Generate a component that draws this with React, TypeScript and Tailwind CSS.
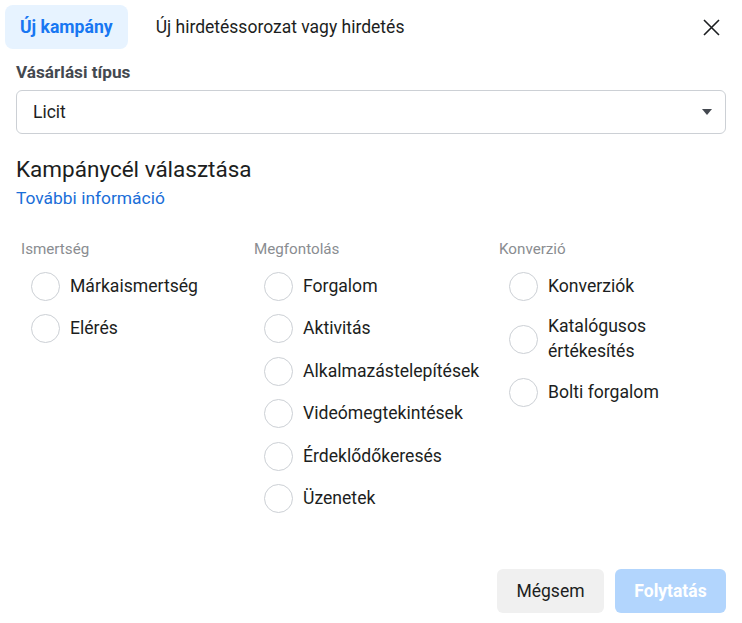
import React from 'react';

type Col = { title: string; items: string[][] };

const columns: Col[] = [
  { title: 'Ismertség', items: [['Márkaismertség'], ['Elérés']] },
  {
    title: 'Megfontolás',
    items: [['Forgalom'], ['Aktivitás'], ['Alkalmazástelepítések'], ['Videómegtekintések'], ['Érdeklődőkeresés'], ['Üzenetek']],
  },
  { title: 'Konverzió', items: [['Konverziók'], ['Katalógusos', 'értékesítés'], ['Bolti forgalom']] },
];

const widths = ['w-[233px]', 'w-[245px]', 'w-[200px]'];

export default function App() {
  return (
    <div className="h-[623px] w-[742px] bg-white font-['Roboto',sans-serif] text-[#1c1e21]">
      <div className="flex h-[54px] items-center px-[5px]">
        <div className="flex h-[44px] items-center rounded-lg bg-[#e7f3ff] px-[15px] text-[17.6px] font-bold text-[#1877f2]">
          Új kampány
        </div>
        <div className="ml-[28px] text-[17.5px]">Új hirdetéssorozat vagy hirdetés</div>
        <button className="ml-auto mr-[17px] text-[#1c1e21]">
          <svg width="17" height="17" viewBox="0 0 17 17" fill="none" stroke="currentColor" strokeWidth="1.6">
            <path d="M1 1L16 16M16 1L1 16" />
          </svg>
        </button>
      </div>

      <div className="px-4">
        <div className="mt-[8px] text-[17.2px] font-bold leading-[20px] text-[#444950]">Vásárlási típus</div>
        <div className="mt-[8px] flex h-[44px] items-center rounded-md border border-[#ccd0d5] px-[16px]">
          <span className="text-[17.5px]">Licit</span>
          <svg className="ml-auto mr-[-4px]" width="12" height="8" viewBox="0 0 12 8">
            <path d="M1 1h10L6 7z" fill="#444950" />
          </svg>
        </div>

        <div className="mt-[21px] text-[22.5px] leading-[28px]">Kampánycél választása</div>
        <div className="mt-[4px] text-[17.4px] leading-[22px] text-[#1a6ed8]">További információ</div>

        <div className="mt-[31px] flex">
          {columns.map((col, ci) => (
            <div key={col.title} className={widths[ci]}>
              <div className="pl-[5px] text-[15.2px] leading-[18px] text-[#8a8d91]">{col.title}</div>
              <div className="mt-[14px] flex flex-col gap-[13.4px] pl-[15px]">
                {col.items.map((lines) => (
                  <div key={lines[0]} className="flex items-center gap-[10px]">
                    <span className="h-[29px] w-[29px] shrink-0 rounded-full border border-[#ccd0d5]" />
                    <span className="text-[17.6px] leading-[25px]">
                      {lines.map((l) => (
                        <span key={l} className="block">
                          {l}
                        </span>
                      ))}
                    </span>
                  </div>
                ))}
              </div>
            </div>
          ))}
        </div>
      </div>

      <div className="mt-[56px] flex justify-end gap-[11px] pr-4">
        <button className="h-[44px] w-[107px] rounded-md bg-[#f0f0f0] text-[17.5px] text-[#1c1e21]">Mégsem</button>
        <button className="h-[44px] w-[111px] rounded-md bg-[#b2d5fd] text-[17.5px] font-bold text-white">Folytatás</button>
      </div>
    </div>
  );
}
